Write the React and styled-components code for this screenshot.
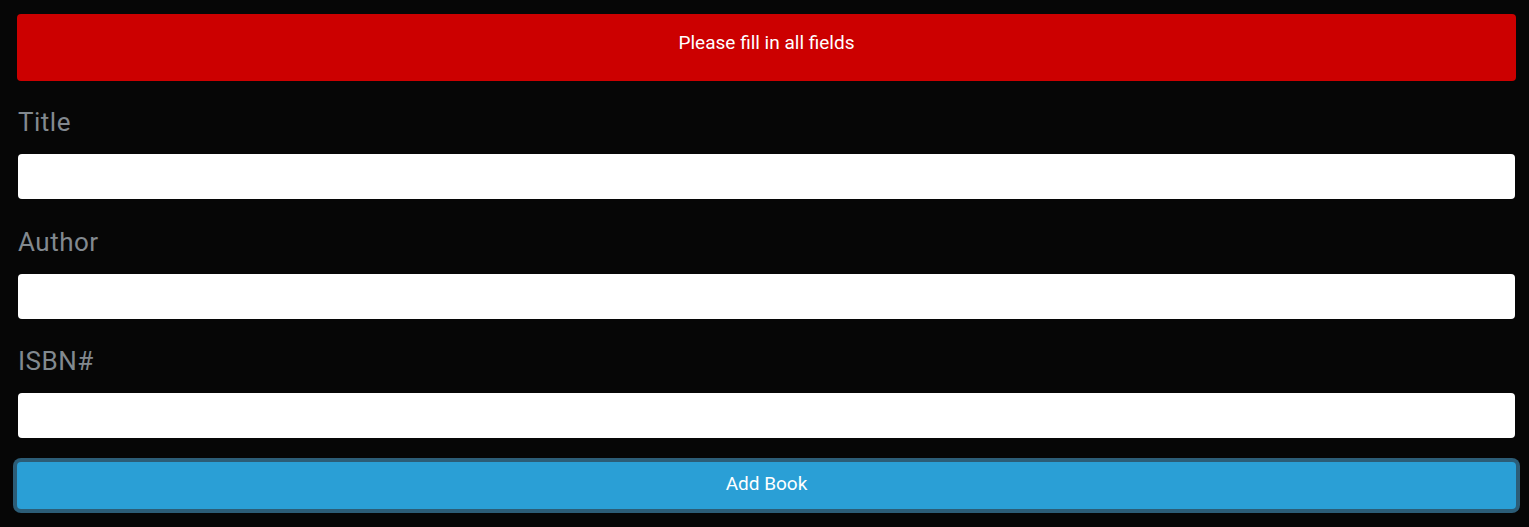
import React, { useState } from 'react';
import styled, { createGlobalStyle } from 'styled-components';

const GlobalStyle = createGlobalStyle`
  html, body {
    margin: 0;
    padding: 0;
    background: #060606;
  }
  body {
    font-family: Roboto, "Liberation Sans", Arial, sans-serif;
    color: #adafae;
  }
  * {
    box-sizing: border-box;
  }
`;

const fields = [
  { id: 'title', label: 'Title' },
  { id: 'author', label: 'Author' },
  { id: 'isbn', label: 'ISBN#' },
];

const App = () => {
  const [values, setValues] = useState({ title: '', author: '', isbn: '' });

  const handleChange = (e) => {
    setValues({ ...values, [e.target.id]: e.target.value });
  };

  return (
    <>
      <GlobalStyle />
      <Page>
        <Alert>Please fill in all fields</Alert>
        <BookForm onSubmit={(e) => e.preventDefault()}>
          {fields.map((f) => (
            <FormGroup key={f.id}>
              <Label htmlFor={f.id}>{f.label}</Label>
              <Input
                id={f.id}
                type="text"
                value={values[f.id]}
                onChange={handleChange}
              />
            </FormGroup>
          ))}
          <SubmitBtn type="submit">Add Book</SubmitBtn>
        </BookForm>
      </Page>
    </>
  );
};

const Page = styled.div`
  padding: 14px 13px 20px 17px;
  display: flex;
  flex-direction: column;
`;

const Alert = styled.div`
  background: #cc0000;
  color: #fff;
  border-radius: 4px;
  height: 67px;
  padding-top: 17px;
  text-align: center;
  font-size: 19px;
  line-height: 24px;
`;

const BookForm = styled.form`
  display: flex;
  flex-direction: column;
  padding-top: 23px;
`;

const FormGroup = styled.div`
  display: flex;
  flex-direction: column;
  margin-bottom: 24.5px;
  padding-left: 1px;
  padding-right: 1px;
`;

const Label = styled.label`
  font-size: 26px;
  line-height: 36px;
  letter-spacing: 0.5px;
  color: #82898f;
  margin-bottom: 14px;
`;

const Input = styled.input`
  height: 45px;
  width: 100%;
  border: none;
  border-radius: 4px;
  background: #fff;
  padding: 0 12px;
  font-family: inherit;
  font-size: 16px;
  outline: none;
`;

const SubmitBtn = styled.button`
  margin-top: -1px;
  height: 47px;
  width: 100%;
  border: none;
  border-radius: 4px;
  padding: 0 0 4px;
  background: #2a9fd6;
  color: #fff;
  font-family: inherit;
  font-size: 19px;
  box-shadow: 0 0 0 4px #2c5d77;
  cursor: pointer;
`;

export default App;
